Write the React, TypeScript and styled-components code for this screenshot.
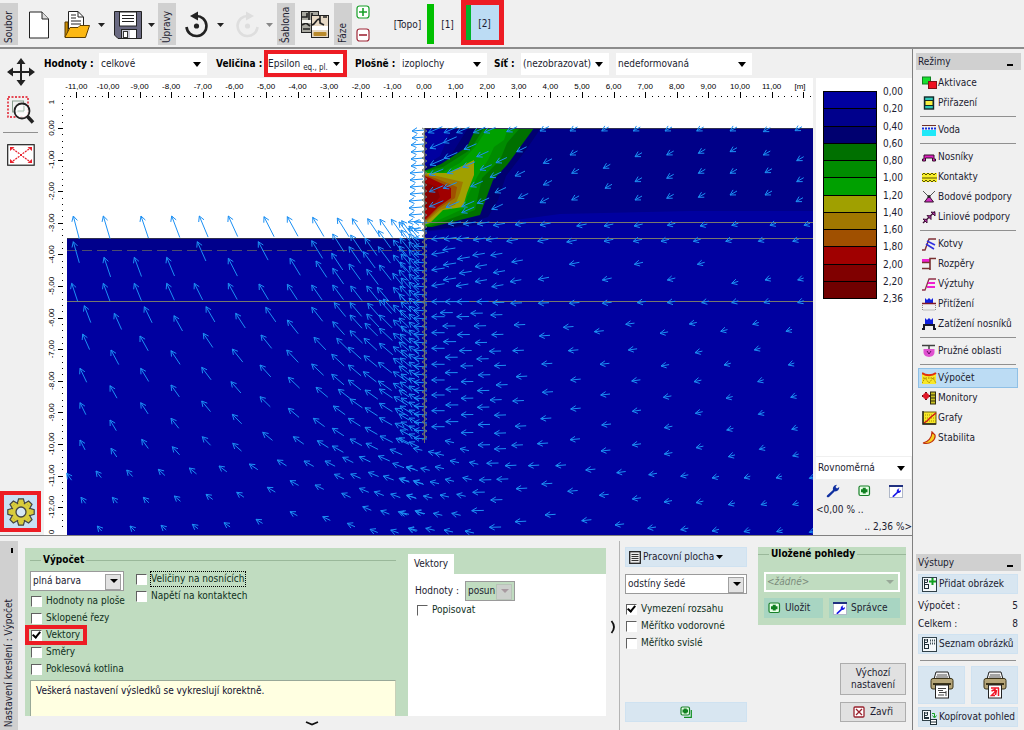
import React from "react";
import styled, { createGlobalStyle, css } from "styled-components";

const Global = createGlobalStyle`
  * { box-sizing: border-box; }
  body { margin: 0; background: #f0f0f0; }
  body, button, select {
    font-family: "DejaVu Sans Condensed", "DejaVu Sans", sans-serif;
    font-size: 10px;
    line-height: 14px;
    color: #1c1c30;
  }
  button, select { margin: 0; border-radius: 0; }
  button svg { flex: none; }
`;

/* ---------- shell ---------- */

const Shell = styled.div`
  min-height: 100vh;
  display: flex;
  flex-direction: column;
`;
const TopBar = styled.header`
  display: flex;
  height: 49px;
  border-bottom: 2px solid #8c8c8c;
`;
const Body = styled.div`
  flex: 1;
  display: flex;
`;
const Main = styled.main`
  flex: 1;
  min-width: 0;
  display: flex;
  flex-direction: column;
`;
const Work = styled.section`
  flex: 1;
  display: flex;
`;
const Tools = styled.nav`
  width: 44px;
  display: flex;
  flex-direction: column;
  padding-top: 8px;
`;
const ToolGap = styled.div`
  height: 8px;
`;
const View = styled.div`
  flex: 1;
  min-width: 0;
  display: flex;
  flex-direction: column;
`;
const Canvas = styled.div`
  flex: 1;
  display: flex;
  gap: 3px;
`;
const ChartPane = styled.div`
  flex: 1;
  min-width: 0;
  display: grid;
  background: #fff;
`;
const ChartSvg = styled.svg`
  display: block;
  width: 100%;
  height: 100%;
`;

/* ---------- toolbar ---------- */

const VTab = styled.div`
  width: 18px;
  height: 42px;
  margin-top: 3px;
  background: #d0d0d0;
  writing-mode: vertical-rl;
  transform: rotate(180deg);
  line-height: 18px;
  padding-top: 2px;
  white-space: nowrap;
`;
const TabSlot = styled.div<{ $before?: number }>`
  margin-left: ${(p) => p.$before ?? 0}px;
`;
const IconButton = styled.button<{ $w: number; $h?: number; $before?: number }>`
  width: ${(p) => p.$w}px;
  height: ${(p) => p.$h ?? 49}px;
  margin-left: ${(p) => p.$before ?? 0}px;
  padding: 0;
  border: 0;
  background: none;
  display: flex;
  align-items: center;
  justify-content: center;
  flex: none;
`;
const PhaseStack = styled.div`
  width: 36px;
  padding: 5px 0 0 4px;
  display: flex;
  flex-direction: column;
  gap: 9px;
`;
const Phase = styled.button<{ $w: number }>`
  width: ${(p) => p.$w}px;
  height: 49px;
  padding: 0;
  border: 0;
  background: none;
`;
const PhaseMark = styled.div`
  width: 7px;
  height: 40px;
  margin-top: 4px;
  background: #00c000;
`;
const ActivePhase = styled.button`
  width: 43px;
  height: 45px;
  padding: 2px 0 0 4px;
  border: 5px solid #ed1c24;
  background: linear-gradient(to right, #00b42c 5px, #bcdcf4 5px);
`;

/* ---------- filters ---------- */

const Filters = styled.div`
  display: flex;
  align-items: center;
  height: 29px;
`;
const FilterLabel = styled.label<{ $w: number }>`
  width: ${(p) => p.$w}px;
  font-weight: bold;
  color: #000;
  white-space: nowrap;
`;
const Field = styled.span<{ $w: number; $gap?: number }>`
  position: relative;
  width: ${(p) => p.$w}px;
  margin-right: ${(p) => p.$gap ?? 0}px;
  height: 22px;
  display: flex;
  background: #fff;
  &::after {
    content: "";
    position: absolute;
    right: 6px;
    top: 9px;
    border: 4px solid transparent;
    border-top: 5px solid #000;
    border-bottom: 0;
    pointer-events: none;
  }
`;
const PlainSelect = styled.select`
  appearance: none;
  flex: 1;
  min-width: 0;
  border: 0;
  background: none;
  padding: 0 0 0 2px;
`;
const MarkedPicker = styled.button`
  width: 83px;
  height: 27px;
  margin-right: 8px;
  border: 4px solid #ed1c24;
  background: #fff;
  padding: 0 3px 0 0;
  display: flex;
  align-items: center;
  justify-content: space-between;
  white-space: nowrap;
  sub {
    font-size: 8px;
    line-height: 0;
    vertical-align: -3px;
  }
`;

/* ---------- left tools ---------- */

const ToolRule = styled.hr`
  width: 35px;
  margin: 7px 0 10px 3px;
  border: 0;
  border-top: 1px solid #909090;
`;
const GearButton = styled.button`
  width: 41px;
  height: 41px;
  margin-top: auto;
  margin-bottom: 3px;
  padding: 0;
  border: 4px solid #ed1c24;
  background: #c8e0f4;
  display: grid;
  place-items: center;
`;

/* ---------- legend ---------- */

const Legend = styled.aside`
  width: 96px;
  display: flex;
  flex-direction: column;
`;
const Scale = styled.div`
  flex: 1;
  background: #fff;
  padding: 13px 0 0 7px;
  display: flex;
  align-items: flex-start;
  gap: 6px;
`;
const ScaleBar = styled.div`
  width: 54px;
  height: 208px;
  display: flex;
  flex-direction: column;
  border: 1px solid #000;
`;
const Swatch = styled.div<{ $c: string }>`
  flex: 1;
  background: ${(p) => p.$c};
  & + & { border-top: 1px solid #000; }
`;
const ScaleText = styled.div`
  height: 221px;
  margin-top: -6px;
  display: flex;
  flex-direction: column;
  justify-content: space-between;
`;
const ScaleMode = styled.div`
  display: flex;
  padding-top: 1px;
`;
const ScaleTools = styled.div`
  display: flex;
  justify-content: space-between;
  height: 24px;
  padding: 0 6px 0 7px;
`;
const Range = styled.div<{ $right?: boolean }>`
  height: ${(p) => (p.$right ? 15 : 17)}px;
  text-align: ${(p) => (p.$right ? "right" : "left")};
`;

/* ---------- sidebar ---------- */

const Side = styled.aside`
  width: 112px;
  border-left: 1px solid #808080;
  padding: 4px 3px 3px;
  display: flex;
  flex-direction: column;
`;
const SideHead = styled.h2`
  margin: 0;
  height: 17px;
  padding: 0 8px 0 2px;
  background: #d0d0d0;
  font-size: 10px;
  font-weight: normal;
  line-height: 17px;
  display: flex;
  justify-content: space-between;
  &::after {
    content: "";
    width: 6px;
    height: 2px;
    margin-top: 11px;
    background: #000;
  }
`;
const Modes = styled.nav`
  display: flex;
  flex-direction: column;
  padding: 3px 3px 0 2px;
`;
const Mode = styled.button<{ $on?: boolean }>`
  height: 20px;
  padding: 0 0 0 3px;
  border: 1px solid ${(p) => (p.$on ? "#8fc0e6" : "transparent")};
  background: ${(p) => (p.$on ? "#bcdcf4" : "none")};
  display: flex;
  align-items: center;
  gap: 1px;
  white-space: nowrap;
  text-align: left;
`;
const SideRule = styled.hr`
  margin: 3px 2px;
  border: 0;
  border-top: 1px solid #909090;
`;
const OutputRule = styled(SideRule)`
  margin: 6px 2px 5px;
`;
const Outputs = styled.section`
  margin-top: auto;
`;
const OutputBody = styled.div`
  padding: 3px 3px 0 2px;
`;
const SoftButton = styled.button<{ $h?: number; $tint?: string; $center?: boolean }>`
  width: 100%;
  height: ${(p) => p.$h ?? 20}px;
  padding: 0 2px 0 3px;
  border: 1px solid ${(p) => p.$tint ?? "#cfe2f1"};
  background: ${(p) => p.$tint ?? "#d8e6f1"};
  display: flex;
  align-items: center;
  justify-content: ${(p) => (p.$center ? "center" : "flex-start")};
  gap: ${(p) => (p.$tint ? 4 : 2)}px;
  white-space: nowrap;
`;
const Count = styled.div`
  display: flex;
  justify-content: space-between;
  height: 18px;
  line-height: 18px;
`;
const CountList = styled.div`
  padding: 3px 0 1px;
`;
const Pair = styled.div`
  display: grid;
  grid-template-columns: 1fr 1fr;
  gap: 6px;
  margin-bottom: 3px;
`;

/* ---------- bottom panel ---------- */

const Bottom = styled.section`
  height: 195px;
  flex: none;
  display: flex;
  border-top: 1px solid #808080;
`;
const BottomTab = styled.div`
  width: 18px;
  height: 189px;
  margin: 5px 7px 0 0;
  background: #d0d0d0;
  display: flex;
  flex-direction: column;
  align-items: center;
  justify-content: space-between;
  padding: 7px 0 3px;
  &::before {
    content: "";
    width: 2px;
    height: 5px;
    margin-left: 5px;
    background: #000;
  }
  span {
    writing-mode: vertical-rl;
    transform: rotate(180deg);
    line-height: 18px;
    white-space: nowrap;
  }
`;
const Drawing = styled.div`
  flex: 1;
  min-width: 0;
  padding-top: 12px;
  display: flex;
  flex-direction: column;
`;
const Green = styled.div`
  display: flex;
  height: 168px;
  background: #c0dcc0;
`;
const Group = styled.div`
  flex: 1;
  min-width: 0;
  margin: 0 12px 0 0;
  padding: 5px 0 0 5px;
  display: flex;
  flex-direction: column;
`;
const GroupTitle = styled.h3<{ $lead: number }>`
  margin: 0;
  font-size: 10px;
  line-height: 14px;
  color: #000;
  display: flex;
  align-items: center;
  gap: 2px;
  white-space: nowrap;
  &::before, &::after {
    content: "";
    height: 1px;
    background: #9ab89a;
  }
  &::before { width: ${(p) => p.$lead}px; }
  &::after { flex: 1; }
`;
const Columns = styled.div`
  display: flex;
  gap: 11px;
  padding-top: 4px;
`;
const Stack = styled.div<{ $w?: number }>`
  ${(p) => p.$w && css`width: ${p.$w}px;`}
  display: flex;
  flex-direction: column;
  align-items: flex-start;
`;
const Spacer = styled.div`
  height: 2px;
`;
const BoxField = styled.span<{ $w: number; $muted?: boolean; $green?: boolean }>`
  position: relative;
  width: ${(p) => p.$w}px;
  height: 20px;
  display: flex;
  border: 1px solid ${(p) => (p.$green ? "#ffffff" : "#9a9a9a")};
  background: ${(p) => (p.$green ? "#c0dcc0" : p.$muted ? "#c0dcc0" : "#fff")};
  outline: ${(p) => (p.$green ? "1px solid #fff" : "none")};
  outline-offset: -2px;
  &::before {
    content: "";
    position: absolute;
    right: 2px;
    top: 2px;
    width: 14px;
    height: 14px;
    border: ${(p) => (p.$green ? 0 : 1)}px solid ${(p) => (p.$muted ? "#b8c4b8" : "#a0a0a0")};
    background: ${(p) => (p.$green ? "transparent" : p.$muted ? "#ccd0cc" : "#e2e2e2")};
    pointer-events: none;
  }
  &::after {
    content: "";
    position: absolute;
    right: 5px;
    top: 7px;
    border: 4px solid transparent;
    border-top: 4px solid ${(p) => (p.$green ? "#98a898" : p.$muted ? "#a89aa0" : "#000")};
    border-bottom: 0;
    pointer-events: none;
  }
  select:disabled {
    opacity: 1;
    color: ${(p) => (p.$green ? "#7c8c7c" : "#1c1c30")};
    font-style: ${(p) => (p.$green ? "italic" : "normal")};
  }
`;
const Tick = styled.label<{ $mark?: boolean; $focus?: boolean }>`
  position: relative;
  display: flex;
  align-items: center;
  gap: 4px;
  height: 16px;
  padding: 0 0 0 1px;
  white-space: nowrap;
  color: #10301c;
  margin-bottom: 1px;
  span { outline: ${(p) => (p.$focus ? "1px dotted #000" : "none")}; }
  ${(p) => p.$mark && css`
    &::after {
      content: "";
      position: absolute;
      inset: -2px -7px -2px -5px;
      border: 4px solid #ed1c24;
    }
  `}
  input {
    appearance: none;
    width: 11px;
    height: 11px;
    margin: 0;
    background: #fff;
    border: 1px solid #fff;
    border-top-color: #606060;
    border-left-color: #606060;
    display: grid;
    place-items: center;
  }
  input:checked::before {
    content: "";
    width: 3px;
    height: 6px;
    margin-top: -2px;
    border: solid #000;
    border-width: 0 2px 2px 0;
    transform: rotate(40deg);
  }
`;
const Note = styled.div`
  margin-top: auto;
  height: 36px;
  padding: 3px 5px;
  background: #ffffe1;
  border: 1px solid #98a898;
  border-bottom: 0;
  border-right-color: #c8d0b8;
  color: #101030;
`;
const Vectors = styled.div`
  width: 198px;
  padding-top: 6px;
  display: flex;
  flex-direction: column;
`;
const VectorTab = styled.button`
  width: 46px;
  height: 20px;
  padding: 0;
  border: 0;
  background: #fff;
`;
const VectorBody = styled.div`
  flex: 1;
  background: #fff;
  padding: 7px 7px 0;
`;
const Line = styled.div`
  display: flex;
  align-items: center;
  gap: 6px;
`;
const LabelRow = styled.div`
  padding: 1px;
`;
const Fold = styled.button`
  padding: 0 8px 0 0;
  border: 0;
  background: none;
  height: 14px;
  display: grid;
  place-items: center;
`;
const FoldSide = styled(Fold)`
  width: 14px;
  height: 189px;
  margin-top: 5px;
  padding: 0 0 18px;
  border-right: 1px solid #b4b4b4;
`;
const Workspace = styled.div`
  width: 127px;
  padding: 11px 0 8px 5px;
  display: flex;
  flex-direction: column;
  gap: 7px;
  > :last-child { margin-top: auto; }
`;
const Saved = styled.div`
  width: 165px;
  padding: 11px 6px 8px 11px;
  display: flex;
  flex-direction: column;
`;
const SavedBox = styled.div`
  height: 78px;
  background: #c0dcc0;
`;
const SavedInner = styled.div`
  padding: 11px 6px 0;
  display: flex;
  flex-direction: column;
  gap: 6px;
`;
const SavedButtons = styled.div`
  display: grid;
  grid-template-columns: 59px 1fr;
  gap: 6px;
`;
const PushButton = styled.button<{ $h: number }>`
  align-self: flex-end;
  width: 66px;
  height: ${(p) => p.$h}px;
  border: 1px solid #adadad;
  background: #e1e1e1;
  padding: 0 4px;
  line-height: 12px;
  display: flex;
  align-items: center;
  justify-content: center;
  gap: 5px;
`;
const Actions = styled.div`
  margin-top: auto;
  display: flex;
  flex-direction: column;
  gap: 7px;
`;

/* ---------- icons ---------- */

const Drop = ({ c = "#222" }: { c?: string }) => (
  <svg width="7" height="4" aria-hidden="true"><path d="M0 0H7L3.500 4Z" fill={c} /></svg>
);
const NewIcon = () => (
  <svg width="22" height="28" aria-hidden="true">
    <path d="M1.500 1H14L20.500 8V27H1.500Z" fill="#fff" stroke="#222" />
    <path d="M14 1V8H20.500" fill="#ddd" stroke="#222" />
  </svg>
);
const OpenIcon = () => (
  <svg width="26" height="29" aria-hidden="true">
    <path d="M1 27V12H4V24L7 17H21V27Z" fill="#c98b00" stroke="#5b3d00" />
    <path d="M4.500 19V1.500H14L19.500 7V19Z" fill="#fff" stroke="#222" />
    <path d="M14 1.500V7H19M7 5H12M7 8H12M7 11H17M7 14H17" fill="none" stroke="#222" />
    <path d="M1 27L6 17.500H14L16 15.500H25.500L21.500 27.500H1Z" fill="#fcb813" stroke="#5b3d00" />
  </svg>
);
const SaveIcon = () => (
  <svg width="28" height="28" aria-hidden="true">
    <path d="M.5 .5H27.500V27.500H4L.5 24Z" fill="#6a6a82" stroke="#222" />
    <rect x="5.500" y="1" width="17" height="14" fill="#fff" stroke="#222" />
    <path d="M8 4.500H20M8 7.500H20M8 10.500H20" stroke="#222" />
    <rect x="7.500" y="18.500" width="15" height="9" fill="#c8c8d4" stroke="#222" />
    <rect x="9.500" y="20.500" width="4" height="6" fill="#fff" stroke="#333" />
    <rect x="16" y="19" width="6" height="8" fill="#fff" />
  </svg>
);
const TurnIcon = ({ c, flip }: { c: string; flip?: boolean }) => (
  <svg width="26" height="28" viewBox="0 0 26 28" aria-hidden="true">
    <g transform={flip ? "matrix(-1 0 0 1 26 0)" : undefined}>
      <path d="M12 5A10 10 0 1 1 2.500 16" fill="none" stroke={c} strokeWidth="2.600" />
      <path d="M6 5L14 .5V9.500Z" fill={c} />
      <circle cx="12.500" cy="15" r="2.600" fill={c} />
    </g>
  </svg>
);
const TemplateIcon = () => (
  <svg width="29" height="29" aria-hidden="true">
    <rect x=".5" y="1.500" width="17" height="21" fill="#a8a8a0" stroke="#222" />
    <path d="M1 7H6V3M8 2V12M11 3V9M1 15L5 13L9 16M2 19H9" stroke="#222" strokeWidth="1.600" fill="none" />
    <path d="M1 10H10V13H1Z" fill="#f4f4f0" />
    <rect x="10.500" y="5.500" width="17" height="22" fill="#e6d8c4" stroke="#222" />
    <path d="M11 15C15 14 15 9 18 9L20 14M19 6V13L23 15M22 7H26" stroke="#222" strokeWidth="1.600" fill="none" />
    <path d="M11 16H27V20H11Z" fill="#fff" />
    <rect x="12.500" y="22" width="13" height="4" rx="1" fill="#b98a2c" />
  </svg>
);
const SignIcon = ({ c, plus }: { c: string; plus?: boolean }) => (
  <svg width="14" height="14" aria-hidden="true">
    <rect x="1" y="1" width="12" height="12" rx="2.500" fill="#fff" stroke={c} strokeWidth="1.200" />
    <path d={plus ? "M3 7H11M7 3V11" : "M3 7H11"} stroke={c} strokeWidth="1.600" />
  </svg>
);
const MoveIcon = () => (
  <svg width="28" height="28" aria-hidden="true">
    <path d="M14 4V24M4 14H24" stroke="#222" strokeWidth="2" />
    <path d="M14 0L18.500 6H9.500ZM14 28L18.500 22H9.500ZM0 14L6 9.500V18.500ZM28 14L22 9.500V18.500Z" fill="#222" />
  </svg>
);
const LoupeIcon = () => (
  <svg width="28" height="28" aria-hidden="true">
    <rect x="1" y="1" width="20" height="20" fill="none" stroke="#e01020" strokeDasharray="2 1.500" strokeWidth="1.400" />
    <rect x="5.500" y="5" width="11" height="11" fill="none" stroke="#8aa08f" />
    <circle cx="15" cy="15" r="7.500" fill="#fff" fillOpacity=".8" stroke="#222" strokeWidth="1.800" />
    <path d="M10.500 15H17M17 10V15" stroke="#a8c0b0" fill="none" />
    <path d="M20.500 20.500L26 26.500" stroke="#222" strokeWidth="3.500" />
  </svg>
);
const FitIcon = () => (
  <svg width="28" height="22" aria-hidden="true">
    <rect x=".7" y=".7" width="26.500" height="20.500" fill="#fff" stroke="#222" strokeWidth="1.200" />
    <path d="M6 5L12 9.500M22 5L16 9.500M6 17L12 12.500M22 17L16 12.500" stroke="#e8202c" strokeWidth="1.300" strokeDasharray="2 1" />
    <path d="M3 3H7.500L3 7ZM25 3H20.500L25 7ZM3 19H7.500L3 15ZM25 19H20.500L25 15Z" fill="#e8202c" />
    <path d="M12.500 9.500L15.500 12.500M15.500 9.500L12.500 12.500" stroke="#e8202c" />
  </svg>
);
const GearIcon = () => {
  const teeth = Array.from({ length: 8 }, (_, i) => i * 45);
  return (
    <svg width="28" height="28" viewBox="-14 -14 28 28" aria-hidden="true">
      {teeth.map((a) => (
        <path key={a} d="M-3.800 -8L-2.400 -13.200H2.400L3.800 -8Z" transform={`rotate(${a})`} fill="#d8cc3c" stroke="#444" strokeWidth="1.200" />
      ))}
      <circle r="9.200" fill="#d8cc3c" stroke="#444" strokeWidth="1.200" />
      {teeth.map((a) => (
        <path key={a} d="M-2.800 -6.500V-10H2.800V-6.500Z" transform={`rotate(${a})`} fill="#d8cc3c" />
      ))}
      <circle r="5" fill="#d5e8f6" stroke="#444" strokeWidth="1.300" />
    </svg>
  );
};
const WrenchShape = ({ c }: { c: string }) => (
  <path fill={c} d="M1 11.500L7 6C6.500 3.500 8 1 11 .8L9.500 3L11 4.500L13.300 3C13.300 6 11 7.800 8.800 7.300L3 13C1.800 14 0 12.800 1 11.500Z" />
);
const WrenchIcon = () => (
  <svg width="14" height="14" aria-hidden="true"><WrenchShape c="#1030a0" /></svg>
);
const StoreIcon = ({ double }: { double?: boolean }) => (
  <svg width="13" height="12" aria-hidden="true">
    {double && <path d="M4 11.300H11.300V4" fill="none" stroke="#109020" strokeWidth="1.200" />}
    <rect x="1" y="1" width={double ? 8.5 : 10.5} height={double ? 8 : 9.5} rx="1.500" fill="#e8ffe8" stroke="#188028" strokeWidth="1.200" />
    <path d={double ? "M2.500 5H8M5.250 2.500V7.500" : "M3 5.700H9.500M6.250 2.800V8.600"} stroke="#108020" strokeWidth="3" />
  </svg>
);
const ManagerIcon = () => (
  <svg width="14" height="13" viewBox="0 0 14 13" aria-hidden="true">
    <rect x=".5" y=".5" width="13" height="12" fill="#fff" stroke="#b0b8c8" />
    <rect width="14" height="2" fill="#203080" />
    <g transform="translate(3 3) scale(.68)"><WrenchShape c="#1818e8" /></g>
  </svg>
);
const ListIcon = () => (
  <svg width="12" height="13" aria-hidden="true">
    <rect x=".7" y=".7" width="10.600" height="11.600" fill="#eee" stroke="#222" strokeWidth="1.300" />
    <path d="M2.500 3.500H9.500M2.500 5.500H9.500M2.500 7.500H9.500M2.500 9.500H9.500" stroke="#333" />
  </svg>
);
const CloseIcon = () => (
  <svg width="12" height="12" aria-hidden="true">
    <rect x="1" y="1" width="10" height="10" rx="1" fill="#fff" stroke="#98202c" strokeWidth="1.300" />
    <path d="M3 3L9 9M9 3L3 9" stroke="#98202c" strokeWidth="1.300" />
  </svg>
);
const PictureIcon = ({ kind }: { kind: "add" | "list" | "copy" }) => (
  <svg width="15" height="15" aria-hidden="true">
    <rect x=".5" y=".5" width={kind === "copy" ? 8 : 14} height={kind === "copy" ? 10 : 14} fill="#f4f8fa" stroke="#304048" />
    <path d="M2.500 2V7M2.500 3H5M2.500 5.500H5M5.500 2V5.500" stroke="#203038" fill="none" />
    <rect x="2.500" y="7.500" width="4" height={kind === "copy" ? 1 : 4} fill="none" stroke="#203038" />
    {kind === "add" && <path d="M7 4.500H14M10.500 1V8" stroke="#10a020" strokeWidth="2" />}
    {kind === "list" && <path d="M8 3.500H13M8 6.500H13" stroke="#405058" strokeDasharray="1 1" strokeWidth="2" />}
    {kind === "copy" && (
      <>
        <path d="M10 3.500H12.500V7M10.500 5.500L12.500 8L14.500 5.500" stroke="#10a020" fill="none" />
        <rect x="8.500" y="9.500" width="6" height="5" fill="#fff" stroke="#203038" />
        <path d="M8 12H15" stroke="#203038" />
      </>
    )}
  </svg>
);
const PrinterIcon = ({ red }: { red?: boolean }) => (
  <svg width="24" height="28" aria-hidden="true">
    <path d="M4 8L6 1H18L20 8Z" fill="#f4f4f4" stroke="#222" />
    <path d="M7 4H17M6 6H18" stroke="#555" />
    <rect x="1" y="7.500" width="22" height="10.500" rx="2" fill="#b5a578" stroke="#3b3318" />
    <rect x="3" y="12" width="18" height="2" fill="#3b3318" />
    <rect x="5.500" y="14" width="13" height="13" fill="#fff" stroke="#222" />
    {red ? (
      <path d="M8 17H16M15.500 17V25M8.500 20L12 18.500V21L8.500 24.500H12M13.500 19L12.500 24" fill="none" stroke="#f01828" strokeWidth="1.500" />
    ) : (
      <path d="M8 17.500H16M8 19.500H13M9 21.500H16M8 24H14M16 20V25" stroke="#444" />
    )}
  </svg>
);

const modeIcons: Record<string, React.ReactNode> = {
  aktivace: (<><rect x=".5" y="1" width="8" height="7" fill="#18e030" stroke="#108020" /><rect x="6.500" y="5.500" width="8" height="7" fill="#f01020" stroke="#801018" /></>),
  prirazeni: (<><rect x="2.500" y="1" width="9" height="12" fill="#30c8b8" stroke="#102828" strokeWidth="1.400" /><rect x="3" y="4.500" width="8" height="5" fill="#f8f040" stroke="#102828" /></>),
  voda: (<><path d="M0 2.500H14" stroke="#703028" /><path d="M0 5.500H14" stroke="#1030e0" strokeWidth="2" strokeDasharray="2 1" /><rect y="7" width="14" height="6" fill="#20e8f8" /></>),
  nosniky: (<path d="M.5 11V9H2V5H12V9H13.500V11H10.500V8H3.500V11Z" fill="#e020c0" stroke="#301028" />),
  kontakty: (<><rect y="3" width="15" height="9" fill="#f8f028" /><path d="M0 5L2 3L4 5L6 3L8 5L10 3L12 5L14 3M0 8H15M0 10L2 12L4 10L6 12L8 10L10 12L12 10L14 12" fill="none" stroke="#585000" /></>),
  bodove: (<><path d="M1 1L7 7L13 1" fill="none" stroke="#555" /><path d="M7 6L11.500 12H2.500Z" fill="#d030c0" stroke="#301028" /><circle cx="7" cy="6.500" r="1.500" fill="#222" /></>),
  liniove: (<><path d="M1 13L13 1.500" stroke="#401038" strokeWidth="1.400" /><path d="M1 9L5 9.500L5 13ZM5 5.500L9 6L9 9.500ZM9 2L13 2.500L13 6Z" fill="#c030b0" stroke="#401038" /></>),
  kotvy: (<><path d="M0 13H3L7 2H14" fill="none" stroke="#803038" strokeWidth="1.400" /><path d="M5 4L13 8M4 7L12 12" stroke="#3030e0" strokeWidth="1.600" /></>),
  rozpery: (<><rect y="2" width="8" height="3" fill="#f020d0" /><path d="M0 5.500H8M0 11.500H8M8 13V1.500H14" fill="none" stroke="#783030" strokeWidth="1.600" /></>),
  vyztuhy: (<><path d="M0 13H3L7 2H14" fill="none" stroke="#903048" strokeWidth="1.300" /><path d="M6 6H13M5 10H13" stroke="#f020d0" strokeWidth="1.800" /></>),
  pritizeni: (<><path d="M3 1V7H11V1L9 3L7 1L5 3Z" fill="#1020e0" /><path d="M0 6.500H14" stroke="#801828" strokeWidth="1.500" /><path d="M.5 8V13H13.500V8" fill="none" stroke="#888" strokeDasharray="1 1" /></>),
  zatizeni: (<><path d="M3 1V7H11V1L9 3L7 1L5 3Z" fill="#1020e0" /><path d="M0 12H3M11 12H14M2 12V8H12V12" fill="none" stroke="#181828" strokeWidth="2" /></>),
  pruzne: (<><path d="M0 1.500H13M7 2V9" stroke="#404040" strokeWidth="1.500" /><path d="M1.500 5H12.500V8C12.500 14.500 1.500 14.500 1.500 8Z" fill="#e050d0" /><path d="M5 7L7 10L9 7" stroke="#601060" fill="none" /></>),
  vypocet: (<><rect y="3" width="14" height="10" fill="#f8e828" /><path d="M0 2C4 5 10 5 14 2" fill="none" stroke="#e03010" strokeWidth="2" /><path d="M0 12L3 7L7 12L11 7L14 12M1 7H13" fill="none" stroke="#a08000" strokeDasharray="1.500 1" /></>),
  monitory: (<><path d="M4 1V9M0 5H8" stroke="#701018" strokeWidth="2" /><circle cx="4" cy="5" r="3" fill="#e01828" /><rect x="8.500" y="1" width="5" height="12" fill="#c8c020" stroke="#302c10" /><path d="M8 4H13M8 7H13M8 10H13" stroke="#302c10" /></>),
  grafy: (<><rect x="1" y="1" width="13" height="12" fill="#f8e828" stroke="#686010" /><path d="M1 4H14M1 7H14M1 10H14" stroke="#a09000" strokeDasharray="1 1" /><path d="M2 12L5 10L9 6L14 2" fill="none" stroke="#d01818" strokeWidth="1.500" /><path d="M1 0V13H14" fill="none" stroke="#222" strokeWidth="1.400" /></>),
  stabilita: (<path d="M10 1L13 4C14 9 8 14 1 12C6 11 10 7 10 1Z" fill="#f8d020" stroke="#c03010" strokeWidth="1.200" />),
};

/* ---------- chart ---------- */

const UNIT = 31.6;
const X0 = 424;
const Y0 = 128;

type P = [number, number];

const block = (ox: number, oy: number, data: string): P[] =>
  data.trim().split(/\s+/).map((s) => {
    const [x, y] = s.split(",").map(Number);
    return [ox + x / 3, oy + y / 3] as P;
  });

const leftField = block(40, 200, `
100,48 190,48 303,48 395,48 478,48 565,48 672,50 742,50 818,52 892,54 937,56 983,56 1020,58 1054,58 1085,62
100,125 472,125 655,125 815,122 878,102 932,105 975,115 1015,92 1060,120
192,172 283,172 380,172 565,175 750,175 828,183 875,160 927,140 970,155 1015,140 1060,165
878,205 927,192 980,208 1018,195 1058,220
95,250 190,250 283,250 380,250 463,250 565,250 657,252 742,253 815,255 878,255 932,258 980,258 1012,262 1060,262
1030,297 883,308 930,308 983,310 1018,300 1060,315 133,317 313,320 498,320 677,322 815,322
223,340 402,347 587,340 742,360 878,365 930,345 980,342 1018,345 1060,360
128,402 300,408 490,400 663,405 822,412 890,415 930,392 975,370 1018,385 1060,400
213,450 393,452 577,447 740,450 875,463 925,442 972,415 1018,430 1060,440
120,505 302,505 485,502 660,495 815,492 875,523 925,495 972,467 1015,487 1060,475
210,557 393,555 573,545 745,532 828,562 895,568 925,540 970,515 1015,543 1060,515
120,608 302,608 485,603 660,590 745,625 820,655 880,618 930,597 975,570 1018,567 1060,550
210,660 393,655 577,643 668,697 760,710 832,722 877,685 925,655 975,623 1018,610 1062,590
120,720 305,718 487,710 578,730 877,738 930,717 975,682 1018,653 1065,625
213,745 397,740 978,730 1020,708 1065,670 1068,715 1050,748
80,820 168,813 260,810 355,808 448,804 537,798 628,792 712,780 792,783 855,783 908,772 958,770 1015,768 1058,790 1100,800
883,823 932,822 985,817 1030,828 1077,835 1120,842 750,842 825,855 905,880 958,865 1003,875 1052,882 1100,885
123,892 217,892 310,892 403,888 498,883 590,877 682,862 968,920 1022,932 1075,935 1125,932
75,980 172,978 270,978 363,976 457,973 552,968 648,958 750,935 848,950 922,970 990,988 1052,990 1105,985`)
  .filter((p) => p[0] > 66);

const rightField = block(400, 200, `
530,78 612,78 702,78 802,76 900,78 995,76 1110,76 1212,76 420,75 345,74 280,76 232,72 190,72 145,72
95,118 132,118 170,118 220,120 258,120 320,124 413,124 500,126 612,124 700,124 783,124 880,124 977,124 1075,124 1178,124
128,150 218,166 272,166 172,177 335,186 508,193 703,193 892,193 95,163 130,195 225,200 280,218 178,220 95,210 130,240 225,245
168,258 275,260 330,245 415,238 607,240 802,240 995,250 1095,240 1193,240 95,257
95,305 135,305 170,305 230,305 278,308 332,310 415,310 508,310 607,310 712,308 802,308 905,308 995,308 1092,308 1193,308
120,338 212,340 272,345 170,350 95,350 128,378 222,378 342,375 490,382 583,395 677,373 780,400 868,372 962,394 1058,373 1158,394
172,404 275,404 418,408 130,425 225,428 95,398 178,452 268,454 338,452 505,452 685,450 885,458 1063,450 95,445
135,472 230,477 425,492 600,493 783,498 972,495 1165,495 182,498 283,497 95,493 135,518 235,525 348,530 512,540 695,543 882,545 1073,545
183,545 288,555 95,540 137,568 232,572 427,577 602,585 790,592 978,595 1172,592
183,595 270,600 338,603 95,585 137,615 232,622 512,627 697,634 886,640 1075,643
183,644 283,646 422,656 95,632 137,665 234,674 345,679 605,675 793,683 980,690 1175,688
183,698 283,700 95,680 135,722 234,735 335,736 412,731 510,719 697,735 888,743 1078,748
180,746 283,747 603,753 793,762 985,770 1178,768 40,745 105,760 85,755 150,782 208,787 260,790 315,797 385,797 467,797 557,810
650,818 746,824 842,829 936,834 1032,834 1128,834 1228,835 18,802 62,805 105,800
0,838 42,845 90,845 135,838 188,833 238,840 290,838 348,866 425,852 503,874 598,886 697,897 792,906 888,908 985,914 1083,914 1178,914
20,887 70,888 120,885 170,883 218,877 272,900 215,932 155,940 100,940 48,935 0,937
435,945 545,962 645,975 743,985 842,989 936,993 1032,995 1130,995 1228,997 345,965 268,982 195,993 132,990 77,985 25,985`);

const upperField = block(360, 110, `
205,68 252,68 290,68 340,68 372,68 440,65 540,63 630,63 250,98 210,115 312,118 350,140 252,145 210,165 470,125 550,160 630,135
408,158 308,172 262,190 360,180 208,195 465,198 550,225 635,190 390,202 332,230 250,235 208,245 405,248 475,265 540,278 635,270
352,280 305,290 258,292 395,298 305,308 208,290 725,63 820,63 915,63 1010,63 1110,63
730,175 735,235 825,140 825,215 825,270 920,135 920,205 920,265 1015,130 1015,190 1015,262 1110,125 1110,190 1110,255
1210,65 1305,62 1210,135 1310,152 1215,188 1310,215 1215,255 1308,275`);

const wallField: P[] = [];
for (let y = 131; y < 236; y += 7) wallField.push([412 - Math.round(((y - 131) / 104) * 4), y]);

const denseField: P[] = [];
for (let y = 222; y < 444; y += 8) {
  denseField.push([399 + (y % 3), y], [409, y + 4], [414, y]);
}

const lerp = (a: number, b: number, t: number) => a + (b - a) * Math.max(0, Math.min(1, t));

/* Offset from an arrow's tip to its tail at a position in the left block. */
const heave = (x: number, y: number): P => {
  const s = (x - 75) / 320;
  const rows: [number, P, P][] = [
    [216, [6, 23], [13, 18]],
    [284, [6, 18], [12, 14]],
    [350, [7, 15], [14, 11]],
    [440, [5, 10], [13, 6]],
    [468, [5, 7], [11, 4]],
    [530, [4, 5], [8, 3]],
  ];
  let i = 0;
  while (i < rows.length - 2 && y > rows[i + 1][0]) i++;
  const [ya, la, ra] = rows[i];
  const [yb, lb, rb] = rows[i + 1];
  const t = (y - ya) / (yb - ya);
  return [lerp(lerp(la[0], ra[0], s), lerp(lb[0], rb[0], s), t), lerp(lerp(la[1], ra[1], s), lerp(lb[1], rb[1], s), t)];
};
const drift = (x: number, y: number): P => {
  const s = (x - 430) / 330;
  if (x < 470 && y > 440) return [9, 2];
  return [lerp(13, 6, s), lerp(y < 300 ? -2 : 0, -2, s)];
};
const slide = (x: number): P => [lerp(14, 7, (x - 430) / 150), lerp(-6, -4, (x - 430) / 150)];

const arrow = ([x, y]: P, [dx, dy]: P) => {
  const a = Math.atan2(dy, dx);
  const barb = (r: number) => `${(x + 6 * Math.cos(a + r)).toFixed(1)} ${(y + 6 * Math.sin(a + r)).toFixed(1)}`;
  return `M${(x + dx).toFixed(1)} ${(y + dy).toFixed(1)}L${x.toFixed(1)} ${y.toFixed(1)}M${barb(0.5)}L${x.toFixed(1)} ${y.toFixed(1)}L${barb(-0.5)}`;
};
const arrows = [
  ...leftField.map((p) => arrow(p, heave(p[0], p[1]))),
  ...rightField.map((p) => arrow(p, drift(p[0], p[1]))),
  ...upperField.map((p) => arrow(p, slide(p[0]))),
  ...wallField.map((p) => arrow(p, [13, -1])),
  ...denseField.map((p, i) => arrow(p, i % 3 === 2 ? [13, 1] : [10, lerp(13, 5, (p[1] - 222) / 220)])),
].join("");

const zones: [string, string][] = [
  ["#000088", "452,128 2000,128 2000,210 690,211 560,214 500,222 424,232 424,166 440,156"],
  ["#000070", "468,128 541,128 526,150 506,176 498,200 488,217 455,227 424,231 424,168 448,160"],
  ["#007000", "476,128 534,128 507,165 493,180 480,215 432,227 424,227 424,171 441,164 467,147"],
  ["#008c00", "484,128 520,128 507,143 500,160 482,178 475,210 430,226 424,226 424,171 443,167 470,150"],
  ["#00a000", "488,128 508,128 504,140 494,147 488,160 477,177 467,197 465,208 428,225 424,226 424,171 443,172 460,163 475,147"],
  ["#a0a000", "424,173 448,173 474,160 474,175 467,193 463,207 443,210 430,223 424,225"],
  ["#a07800", "424,174 437,176 463,182 460,193 455,205 440,210 424,224"],
  ["#a05000", "424,175 435,178 457,187 455,198 438,209 424,223"],
  ["#a00000", "424,176 430,178 451,188 451,198 438,207 424,221"],
  ["#880000", "424,182 437,187 440,197 435,203 424,209"],
];

const RulerText = styled.text`
  font-family: "Liberation Sans", Arial, sans-serif;
  font-size: 8px;
  text-anchor: middle;
  fill: #000;
`;
const num = (n: number) => `${n},00`;

const Chart = () => {
  const xs = Array.from({ length: 23 }, (_, i) => i - 11);
  const ys = Array.from({ length: 13 }, (_, i) => -i);
  const minorX = Array.from({ length: 119 }, (_, i) => i - 57);
  const minorY = Array.from({ length: 68 }, (_, i) => i - 4);
  return (
    <ChartSvg role="img" aria-label="Izoplochy Epsilon eq., pl.">
      <g transform="translate(-44 -78)">
        <rect x="67" y="238" width="357" height="2000" fill="#0000a0" />
        <rect x="424" y="128" width="2000" height="2000" fill="#0000a0" />
        <rect x="67" y="238" width="357" height="13" fill="#00008c" />
        {zones.map(([c, pts]) => <polygon key={c} points={pts} fill={c} />)}
        <path d="M67 301.500H2000M424 222.500H2000M424 238.500H2000" stroke="#78786c" fill="none" />
        <path d="M67 250.500H424" stroke="#4c4c70" strokeDasharray="10 5" />
        <path d="M67 238.500H424M424 128.500H2000" stroke="#303050" />
        <path d={arrows} fill="none" stroke="#1c90f4" />
        <path d="M424.500 128V443" stroke="#6f6f68" />
        <path d={"M422 128" + "l5 3l-5 3".repeat(52)} fill="none" stroke="#6f7a70" />
        <g stroke="#000">
          {minorX.map((i) => {
            const x = Math.round(X0 + (i * UNIT) / 5) + 0.5;
            return <path key={i} d={i % 5 ? `M${x} 96V97` : `M${x} 92V98`} />;
          })}
          {minorY.map((i) => {
            const y = Math.round(Y0 + (i * UNIT) / 5) + 0.5;
            return <path key={i} d={i % 5 ? `M62 ${y}H63` : `M58 ${y}H63`} />;
          })}
        </g>
        {xs.map((n) => <RulerText key={n} x={X0 + n * UNIT} y="89">{num(n)}</RulerText>)}
        <RulerText x="800" y="89">[m]</RulerText>
        {ys.map((n) => (
          <RulerText key={n} transform={`translate(54 ${Y0 - n * UNIT}) rotate(-90)`}>{num(n)}</RulerText>
        ))}
        <RulerText transform="translate(54 102) rotate(-90)">1</RulerText>
        <RulerText transform="translate(54 532) rotate(-90)">0</RulerText>
      </g>
    </ChartSvg>
  );
};

/* ---------- data ---------- */

const swatches = ["#0000a0", "#00008c", "#000070", "#007000", "#008c00", "#00a000", "#a0a000", "#a07800", "#a05000", "#a00000", "#800000", "#700000"];
const marks = ["0,00", "0,20", "0,40", "0,60", "0,80", "1,00", "1,20", "1,40", "1,60", "1,80", "2,00", "2,20", "2,36"];
const modeGroups: [string, string][][] = [
  [["aktivace", "Aktivace"], ["prirazeni", "Přiřazení"]],
  [["voda", "Voda"]],
  [["nosniky", "Nosníky"], ["kontakty", "Kontakty"], ["bodove", "Bodové podpory"], ["liniove", "Liniové podpory"]],
  [["kotvy", "Kotvy"], ["rozpery", "Rozpěry"], ["vyztuhy", "Výztuhy"], ["pritizeni", "Přitížení"], ["zatizeni", "Zatížení nosníků"]],
  [["pruzne", "Pružné oblasti"]],
  [["vypocet", "Výpočet"], ["monitory", "Monitory"], ["grafy", "Grafy"], ["stabilita", "Stabilita"]],
];

const Check = ({ text, on, mark, focus }: { text: string; on?: boolean; mark?: boolean; focus?: boolean }) => (
  <Tick $mark={mark} $focus={focus}>
    <input type="checkbox" defaultChecked={on} />
    <span>{text}</span>
  </Tick>
);

const FilterSelect = ({ id, w, gap, value, label }: { id: string; w: number; gap?: number; value: string; label?: string }) => (
  <Field $w={w} $gap={gap}>
    <PlainSelect id={id} aria-label={label}><option>{value}</option></PlainSelect>
  </Field>
);

export default function App() {
  return (
    <Shell>
      <Global />
      <TopBar>
        <TabSlot><VTab>Soubor</VTab></TabSlot>
        <IconButton $w={22} $before={10} aria-label="Nový"><NewIcon /></IconButton>
        <IconButton $w={26} $before={14} aria-label="Otevřít"><OpenIcon /></IconButton>
        <IconButton $w={7} $before={8} aria-label="Otevřít další"><Drop /></IconButton>
        <IconButton $w={28} $before={9} aria-label="Uložit"><SaveIcon /></IconButton>
        <IconButton $w={7} $before={6} aria-label="Uložit další"><Drop /></IconButton>
        <TabSlot $before={3}><VTab>Úpravy</VTab></TabSlot>
        <IconButton $w={26} $before={8} aria-label="Zpět"><TurnIcon c="#222" /></IconButton>
        <IconButton $w={7} $before={7} aria-label="Historie zpět"><Drop /></IconButton>
        <IconButton $w={26} $before={10} aria-label="Vpřed"><TurnIcon c="#dedede" flip /></IconButton>
        <IconButton $w={7} $before={6} aria-label="Historie vpřed"><Drop c="#888" /></IconButton>
        <TabSlot $before={4}><VTab>Šablona</VTab></TabSlot>
        <IconButton $w={29} $before={6} aria-label="Šablona"><TemplateIcon /></IconButton>
        <TabSlot $before={4}><VTab>Fáze</VTab></TabSlot>
        <PhaseStack>
          <IconButton $w={14} $h={14} aria-label="Přidat fázi"><SignIcon c="#18a028" plus /></IconButton>
          <IconButton $w={14} $h={14} aria-label="Odebrat fázi"><SignIcon c="#a02838" /></IconButton>
        </PhaseStack>
        <Phase $w={39}>[Topo]</Phase>
        <PhaseMark />
        <Phase $w={27}>[1]</Phase>
        <ActivePhase>[2]</ActivePhase>
      </TopBar>
      <Body>
        <Main>
          <Work>
            <Tools>
              <IconButton $w={42} $h={30} aria-label="Posun"><MoveIcon /></IconButton>
              <ToolGap />
              <IconButton $w={42} $h={30} aria-label="Lupa"><LoupeIcon /></IconButton>
              <ToolRule />
              <IconButton $w={42} $h={24} aria-label="Přizpůsobit"><FitIcon /></IconButton>
              <GearButton aria-label="Nastavení kreslení"><GearIcon /></GearButton>
            </Tools>
            <View>
              <Filters>
                <FilterLabel $w={55} htmlFor="hodnoty">Hodnoty :</FilterLabel>
                <FilterSelect id="hodnoty" w={108} gap={9} value="celkové" />
                <FilterLabel $w={48} htmlFor="velicina">Veličina :</FilterLabel>
                <MarkedPicker id="velicina" aria-haspopup="listbox">
                  <span>Epsilon <sub>eq., pl.</sub></span>
                  <Drop c="#000" />
                </MarkedPicker>
                <FilterLabel $w={45} htmlFor="plosne">Plošně :</FilterLabel>
                <FilterSelect id="plosne" w={87} gap={7} value="izoplochy" />
                <FilterLabel $w={27} htmlFor="sit">Síť :</FilterLabel>
                <FilterSelect id="sit" w={88} gap={7} value="(nezobrazovat)" />
                <FilterSelect id="deformace" label="Deformace" w={136} value="nedeformovaná" />
              </Filters>
              <Canvas>
                <ChartPane><Chart /></ChartPane>
                <Legend>
                  <Scale>
                    <ScaleBar>{swatches.map((c) => <Swatch key={c} $c={c} />)}</ScaleBar>
                    <ScaleText>{marks.map((m) => <span key={m}>{m}</span>)}</ScaleText>
                  </Scale>
                  <ScaleMode>
                    <FilterSelect id="skala" label="Škála" w={95} value="Rovnoměrná" />
                  </ScaleMode>
                  <ScaleTools>
                    <IconButton $w={20} $h={24} aria-label="Upravit škálu"><WrenchIcon /></IconButton>
                    <IconButton $w={20} $h={24} aria-label="Uložit škálu"><StoreIcon /></IconButton>
                    <IconButton $w={20} $h={24} aria-label="Správce škál"><ManagerIcon /></IconButton>
                  </ScaleTools>
                  <Range>&lt;0,00 % ..</Range>
                  <Range $right>.. 2,36 %&gt;</Range>
                </Legend>
              </Canvas>
            </View>
          </Work>

          <Bottom>
            <BottomTab><span>Nastavení kreslení : Výpočet</span></BottomTab>
            <Drawing>
              <Green>
                <Group>
                  <GroupTitle $lead={11}>Výpočet</GroupTitle>
                  <Columns>
                    <Stack $w={94}>
                      <BoxField $w={94}><PlainSelect aria-label="Vyplnění"><option>plná barva</option></PlainSelect></BoxField>
                      <Spacer />
                      <Check text="Hodnoty na ploše" />
                      <Check text="Sklopené řezy" />
                      <Check text="Vektory" on mark />
                      <Check text="Směry" />
                      <Check text="Poklesová kotlina" />
                    </Stack>
                    <Stack>
                      <Check text="Veličiny na nosnících" focus />
                      <Check text="Napětí na kontaktech" />
                    </Stack>
                  </Columns>
                  <Note>Veškerá nastavení výsledků se vykreslují korektně.</Note>
                </Group>
                <Vectors>
                  <VectorTab>Vektory</VectorTab>
                  <VectorBody>
                    <Line>
                      <label htmlFor="vektor">Hodnoty :</label>
                      <BoxField $w={50} $muted><PlainSelect id="vektor" disabled><option>posun</option></PlainSelect></BoxField>
                    </Line>
                    <LabelRow><Check text="Popisovat" /></LabelRow>
                  </VectorBody>
                </Vectors>
              </Green>
              <Fold aria-label="Sbalit">
                <svg width="14" height="5" aria-hidden="true"><path d="M1 1L7 3.500L13 1" fill="none" stroke="#111" strokeWidth="1.800" /></svg>
              </Fold>
            </Drawing>
            <FoldSide aria-label="Skrýt">
              <svg width="6" height="14" aria-hidden="true"><path d="M1.500 1Q6.500 7 1.500 13" fill="none" stroke="#111" strokeWidth="1.800" /></svg>
            </FoldSide>
            <Workspace>
              <SoftButton><ListIcon />Pracovní plocha <Drop c="#000" /></SoftButton>
              <BoxField $w={122}><PlainSelect aria-label="Barvy"><option>odstíny šedé</option></PlainSelect></BoxField>
              <Stack>
                <Check text="Vymezení rozsahu" on />
                <Check text="Měřítko vodorovné" />
                <Check text="Měřítko svislé" />
              </Stack>
              <SoftButton $center aria-label="Kopírovat nastavení"><StoreIcon double /></SoftButton>
            </Workspace>
            <Saved>
              <SavedBox>
                <GroupTitle $lead={11}>Uložené pohledy</GroupTitle>
                <SavedInner>
                  <BoxField $w={136} $green><PlainSelect aria-label="Uložené pohledy" disabled><option>&lt;žádné&gt;</option></PlainSelect></BoxField>
                  <SavedButtons>
                    <SoftButton $tint="#a8d5c2"><StoreIcon />Uložit</SoftButton>
                    <SoftButton $tint="#a8d5c2"><ManagerIcon />Správce</SoftButton>
                  </SavedButtons>
                </SavedInner>
              </SavedBox>
              <Actions>
                <PushButton $h={32}>Výchozí nastavení</PushButton>
                <PushButton $h={20}><CloseIcon />Zavři</PushButton>
              </Actions>
            </Saved>
          </Bottom>
        </Main>

        <Side>
          <SideHead>Režimy</SideHead>
          <Modes>
            {modeGroups.map((group, g) => (
              <React.Fragment key={g}>
                {g > 0 && <SideRule />}
                {group.map(([id, name]) => (
                  <Mode key={id} $on={id === "vypocet"}>
                    <svg width="15" height="14" aria-hidden="true">{modeIcons[id]}</svg>
                    {name}
                  </Mode>
                ))}
              </React.Fragment>
            ))}
          </Modes>
          <Outputs>
            <SideHead>Výstupy</SideHead>
            <OutputBody>
              <SoftButton><PictureIcon kind="add" />Přidat obrázek</SoftButton>
              <CountList>
                <Count><span>Výpočet :</span><span>5</span></Count>
                <Count><span>Celkem :</span><span>8</span></Count>
              </CountList>
              <SoftButton><PictureIcon kind="list" />Seznam obrázků</SoftButton>
              <OutputRule />
              <Pair>
                <SoftButton $h={38} $center aria-label="Tisk"><PrinterIcon /></SoftButton>
                <SoftButton $h={38} $center aria-label="Tisk do PDF"><PrinterIcon red /></SoftButton>
              </Pair>
              <SoftButton><PictureIcon kind="copy" />Kopírovat pohled</SoftButton>
            </OutputBody>
          </Outputs>
        </Side>
      </Body>
    </Shell>
  );
}
